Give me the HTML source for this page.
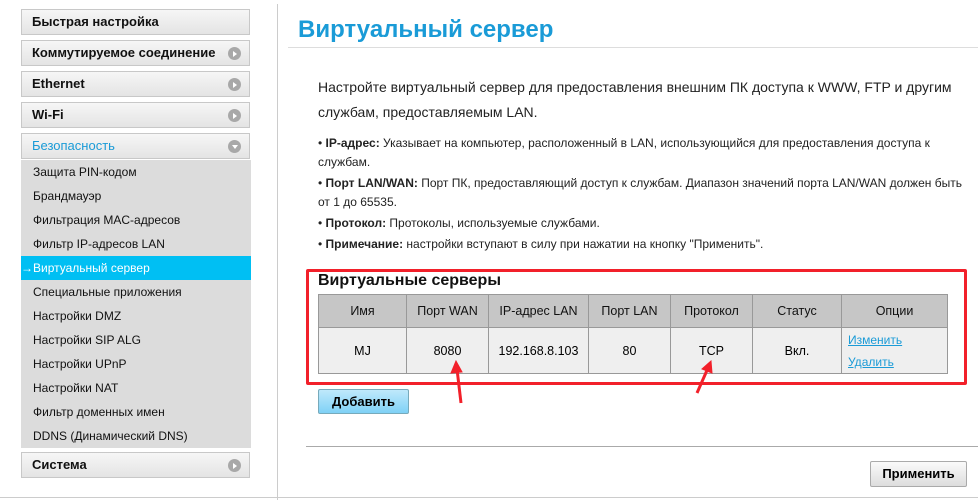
<!DOCTYPE html>
<html><head><meta charset="utf-8"><style>
body{margin:0;width:978px;height:500px;background:#fff;font-family:"Liberation Sans",Arial,sans-serif;position:relative;overflow:hidden}
.a{position:absolute}
.m{position:absolute;left:21px;width:217px;height:24px;border:1px solid #c8c8c8;background:linear-gradient(#f6f6f6,#e4e4e4);font-size:13px;font-weight:bold;line-height:24px;padding-left:10px;color:#111}
.ic{position:absolute;right:8px;top:6px;width:13px;height:13px;border-radius:50%;background:#a8a8a8}
.ic:after{content:"";position:absolute;left:5px;top:3.5px;border-left:4px solid #fff;border-top:3px solid transparent;border-bottom:3px solid transparent}
.dn:after{left:3.5px;top:5px;border-top:4px solid #fff;border-left:3px solid transparent;border-right:3px solid transparent;border-bottom:0}
.sub{position:absolute;left:21px;top:160px;width:230px;height:288px;background:#dcdcdc}
.sub div{height:24px;line-height:24px;font-size:12px;padding-left:12px;color:#111}
.sub .act{background:#00bff3;color:#fff;padding-left:0}
p,li{margin:0}
.t{font-size:12px;color:#222}
table{border-collapse:collapse;position:absolute;left:318px;top:294px;width:630px;font-size:12.5px;table-layout:fixed}
td,th{border:1px solid #999;text-align:center;padding:0}
th{background:#c6c6c6;font-weight:normal;height:32px;color:#111}
td{background:#efefef;height:45px}
a{color:#1a9bd7;text-decoration:underline}
.btn{position:absolute;font-size:13px;font-weight:bold;text-align:center;border:1px solid #aaa;border-radius:2px}
</style></head><body>
<div class="m" style="top:9px">Быстрая настройка</div>
<div class="m" style="top:40px">Коммутируемое соединение<span class="ic"></span></div>
<div class="m" style="top:71px">Ethernet<span class="ic"></span></div>
<div class="m" style="top:102px">Wi-Fi<span class="ic"></span></div>
<div class="m" style="top:133px;color:#1a9bd7;font-weight:normal">Безопасность<span class="ic dn"></span></div>
<div class="sub">
<div>Защита PIN-кодом</div><div>Брандмауэр</div><div>Фильтрация MAC-адресов</div><div>Фильтр IP-адресов LAN</div>
<div class="act">→Виртуальный сервер</div><div>Специальные приложения</div><div>Настройки DMZ</div><div>Настройки SIP ALG</div>
<div>Настройки UPnP</div><div>Настройки NAT</div><div>Фильтр доменных имен</div><div>DDNS (Динамический DNS)</div>
</div>
<div class="m" style="top:452px">Система<span class="ic"></span></div>
<div class="a" style="left:277px;top:4px;width:1px;height:496px;background:#ccc"></div>
<div class="a" style="left:298px;top:16px;font-size:24px;font-weight:bold;color:#1a9bd7">Виртуальный сервер</div>
<div class="a" style="left:288px;top:47px;width:690px;height:1px;background:#ddd"></div>
<div class="a" style="left:318px;top:75px;width:640px;font-size:14px;line-height:25px;color:#222">Настройте виртуальный сервер для предоставления внешним ПК доступа к WWW, FTP и другим службам, предоставляемым LAN.</div>
<ul class="a t" style="left:318px;top:134px;width:658px;margin:0;padding:0;line-height:19px;list-style:none">
<li>• <b>IP-адрес:</b> Указывает на компьютер, расположенный в LAN, использующийся для предоставления доступа к службам.</li>
<li style="margin-top:2px">• <b>Порт LAN/WAN:</b> Порт ПК, предоставляющий доступ к службам. Диапазон значений порта LAN/WAN должен быть от 1 до 65535.</li>
<li style="margin-top:2px">• <b>Протокол:</b> Протоколы, используемые службами.</li>
<li style="margin-top:2px">• <b>Примечание:</b> настройки вступают в силу при нажатии на кнопку "Применить".</li>
</ul>
<div class="a" style="left:306px;top:269px;width:655px;height:110px;border:3px solid #f2202a;border-radius:2px"></div>
<div class="a" style="left:318px;top:272px;font-size:16px;font-weight:bold;color:#111">Виртуальные серверы</div>
<table><tr><th style="width:87px">Имя</th><th style="width:81px">Порт WAN</th><th style="width:99px">IP-адрес LAN</th><th style="width:81px">Порт LAN</th><th style="width:81px">Протокол</th><th style="width:88px">Статус</th><th>Опции</th></tr>
<tr><td>MJ</td><td>8080</td><td>192.168.8.103</td><td>80</td><td>TCP</td><td>Вкл.</td><td style="text-align:left;padding-left:6px;line-height:22px;font-size:12px"><a>Изменить</a><br><a>Удалить</a></td></tr></table>
<svg class="a" style="left:440px;top:355px" width="300" height="55"><g stroke="#f2202a" stroke-width="3" fill="#f2202a"><line x1="21" y1="48" x2="17" y2="14"/><polygon points="16,6 11,18 22,17" stroke-width="1"/><line x1="257" y1="38" x2="268" y2="13"/><polygon points="271,6 262,14 272,18" stroke-width="1"/></g></svg>
<div class="btn" style="left:318px;top:389px;width:89px;height:23px;line-height:23px;background:linear-gradient(#bfe9fb,#7fd1f6);border-color:#7ab">Добавить</div>
<div class="a" style="left:306px;top:446px;width:672px;height:1px;background:#aaa"></div>
<div class="btn" style="left:870px;top:461px;width:95px;height:24px;line-height:24px;background:linear-gradient(#fafafa,#ddd)">Применить</div>
<div class="a" style="left:0;top:497px;width:978px;height:1px;background:#ccc"></div>
</body></html>
